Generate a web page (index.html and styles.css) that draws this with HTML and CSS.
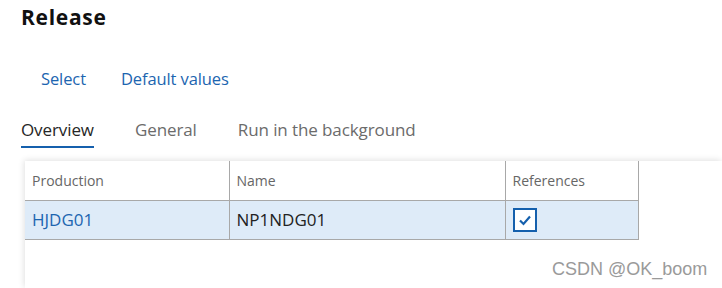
FILE: index.html
```html
<!DOCTYPE html>
<html>
<head>
<meta charset="utf-8">
<link rel="stylesheet" href="styles.css">
</head>
<body>
<div class="page">
  <h1 class="title">Release</h1>
  <div class="actions">
    <a class="action">Select</a>
    <a class="action">Default values</a>
  </div>
  <div class="tabs">
    <span class="tab active">Overview</span>
    <span class="tab">General</span>
    <span class="tab">Run in the background</span>
  </div>
  <div class="panel">
    <table class="grid">
      <thead>
        <tr>
          <th class="c1">Production</th>
          <th class="c2">Name</th>
          <th class="c3">References</th>
        </tr>
      </thead>
      <tbody>
        <tr class="selected">
          <td class="link">HJDG01</td>
          <td>NP1NDG01</td>
          <td><span class="check"><svg width="14" height="12" viewBox="0 0 14 12"><path d="M2 6.5 L5.5 10 L12 2.5" fill="none" stroke="#1560ad" stroke-width="2.2"/></svg></span></td>
        </tr>
      </tbody>
    </table>
    <div class="watermark">CSDN @OK_boom</div>
  </div>
</div>
</body>
</html>
```
FILE: styles.css
```css
html, body {
  margin: 0;
  padding: 0;
  background: #fff;
  overflow: hidden;
}
.page {
  width: 722px;
  height: 288px;
  display: flex;
  flex-direction: column;
  font-family: "Open Sans", "Noto Sans", sans-serif;
  color: #222;
  overflow: hidden;
}
.title {
  margin: 0;
  padding: 3px 0 0 21px;
  font-size: 21px;
  font-weight: 700;
  line-height: 28px;
  letter-spacing: 0.7px;
  color: #111;
}
.actions {
  display: flex;
  gap: 35px;
  padding: 37px 0 0 41px;
}
.action {
  font-size: 16.5px;
  line-height: 22px;
  color: #1c65b0;
  letter-spacing: -0.1px;
}
.tabs {
  display: flex;
  gap: 41px;
  padding: 29px 0 0 21px;
}
.tab {
  font-size: 17px;
  line-height: 22px;
  color: #6b6b6b;
  padding-bottom: 5px;
  border-bottom: 2px solid transparent;
  letter-spacing: -0.1px;
}
.tab.active {
  color: #262626;
  border-bottom-color: #1560ad;
}
.panel {
  flex: 1;
  margin: 13px 0 0 25px;
  background: #fff;
  box-shadow: -1px -1px 6px rgba(0,0,0,0.12);
  position: relative;
}
.grid {
  border-collapse: collapse;
  font-size: 14px;
}
.grid th {
  text-align: left;
  font-weight: 400;
  color: #666;
  height: 39px;
  padding: 0 7px;
  border-right: 1px solid #a8a8a8;
  border-bottom: 1px solid #a8a8a8;
  box-sizing: border-box;
}
.grid td {
  height: 39px;
  padding: 0 7px;
  font-size: 17px;
  color: #222;
  border-right: 1px solid #a8a8a8;
  border-bottom: 1px solid #a8a8a8;
  box-sizing: border-box;
}
.c1 { width: 204px; }
.c2 { width: 276px; }
.c3 { width: 133px; }
.selected td { background: #deebf8; }
.grid td.link { color: #1c65b0; }
.check {
  display: flex;
  align-items: center;
  justify-content: center;
  width: 24px;
  height: 24px;
  box-sizing: border-box;
  border: 2px solid #1560ad;
  background: #fff;
}
.watermark {
  position: absolute;
  left: 527px;
  top: 98px;
  font-family: "Liberation Sans", Arial, sans-serif;
  font-size: 18px;
  color: #9a9a9a;
}
```
